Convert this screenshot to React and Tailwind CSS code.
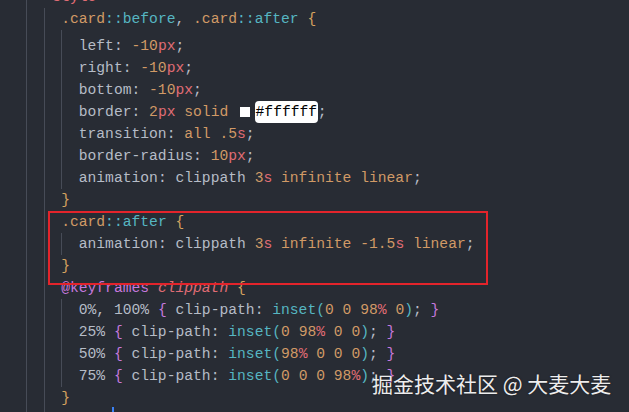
import React from 'react';

const P = 'text-[#b6bcc7]';
const O = 'text-[#d19a66]';
const R = 'text-[#e06c75]';
const T = 'text-[#56b6c2]';
const V = 'text-[#c678dd]';
const Y = 'text-[#d5a25f]';

const Line = ({ indent, h = 'h-[22px]', children }) => {
  const guides = [];
  for (let i = 2; i < indent; i += 2) guides.push(i);
  return (
    <div className={`flex ${h} items-center whitespace-pre`}>
      <span className="w-[2ch] shrink-0 self-stretch" />
      {guides.map((i) => (
        <span key={i} className="w-[2ch] shrink-0 self-stretch border-l border-[#474c57]" />
      ))}
      {children}
    </div>
  );
};

const Px = ({ n }) => (
  <>
    <span className={O}>{n}</span>
    <span className={R}>px</span>
  </>
);

const Prop = ({ name }) => <span className={P}>{name}: </span>;

const Inset = ({ pct, args }) => (
  <>
    <span className={P}>{pct}</span>
    <span className={V}> {'{'} </span>
    <Prop name="clip-path" />
    <span className={T}>inset(</span>
    {args.map((a, i) => (
      <React.Fragment key={i}>
        {i > 0 && <span> </span>}
        {a === '98%' ? (
          <>
            <span className={O}>98</span>
            <span className={R}>%</span>
          </>
        ) : (
          <span className={O}>{a}</span>
        )}
      </React.Fragment>
    ))}
    <span className={T}>)</span>
    <span className={P}>; </span>
    <span className={V}>{'}'}</span>
  </>
);

export default function App() {
  return (
    <div className="relative h-[412px] w-full overflow-hidden bg-[#282c34] font-['Liberation_Mono',monospace] text-[14.67px]">
      <div className="-mt-[14px] flex flex-col pl-[8.4px]">
        <Line indent={4}>
          <span className="text-[#e06c75]">&lt;style&gt;</span>
        </Line>
        <Line indent={6}>
          <span className={O}>.card</span>
          <span className={T}>::before</span>
          <span className={P}>, </span>
          <span className={O}>.card</span>
          <span className={T}>::after</span>
          <span className={Y}> {'{'}</span>
        </Line>
        <Line indent={8} h="h-[5px]" />
        <Line indent={8}>
          <Prop name="left" />
          <Px n="-10" />
          <span className={P}>;</span>
        </Line>
        <Line indent={8}>
          <Prop name="right" />
          <Px n="-10" />
          <span className={P}>;</span>
        </Line>
        <Line indent={8}>
          <Prop name="bottom" />
          <Px n="-10" />
          <span className={P}>;</span>
        </Line>
        <Line indent={8}>
          <Prop name="border" />
          <Px n="2" />
          <span className={O}> solid </span>
          <span className="flex h-full w-[18px] items-center">
            <span className="ml-[3px] h-[10px] w-[10px] bg-white" />
          </span>
          <span className="flex h-full items-center rounded-[4px] bg-white px-[0.5px] text-black">#ffffff</span>
          <span className={P}>;</span>
        </Line>
        <Line indent={8}>
          <Prop name="transition" />
          <span className={O}>all .5</span>
          <span className={R}>s</span>
          <span className={P}>;</span>
        </Line>
        <Line indent={8}>
          <Prop name="border-radius" />
          <Px n="10" />
          <span className={P}>;</span>
        </Line>
        <Line indent={8}>
          <Prop name="animation" />
          <span className={P}>clippath </span>
          <span className={O}>3</span>
          <span className={R}>s</span>
          <span className={O}> infinite linear</span>
          <span className={P}>;</span>
        </Line>
        <Line indent={6}>
          <span className={Y}>{'}'}</span>
        </Line>
        <Line indent={6}>
          <span className={O}>.card</span>
          <span className={T}>::after</span>
          <span className={Y}> {'{'}</span>
        </Line>
        <Line indent={8}>
          <Prop name="animation" />
          <span className={P}>clippath </span>
          <span className={O}>3</span>
          <span className={R}>s</span>
          <span className={O}> infinite -1.5</span>
          <span className={R}>s</span>
          <span className={O}> linear</span>
          <span className={P}>;</span>
        </Line>
        <Line indent={6}>
          <span className={Y}>{'}'}</span>
        </Line>
        <Line indent={6}>
          <span className={V}>@keyframes </span>
          <span className={`${R} italic`}>clippath</span>
          <span className={Y}> {'{'}</span>
        </Line>
        <Line indent={8}>
          <Inset pct="0%, 100%" args={['0', '0', '98%', '0']} />
        </Line>
        <Line indent={8}>
          <Inset pct="25%" args={['0', '98%', '0', '0']} />
        </Line>
        <Line indent={8}>
          <Inset pct="50%" args={['98%', '0', '0', '0']} />
        </Line>
        <Line indent={8}>
          <Inset pct="75%" args={['0', '0', '0', '98%']} />
        </Line>
        <Line indent={6}>
          <span className={Y}>{'}'}</span>
        </Line>
        <Line indent={6} />
      </div>

      {/* highlight annotation */}
      <div className="absolute left-[48px] top-[211px] h-[74px] w-[440px] border-2 border-[#e3242b]" />

      {/* cursor mark */}
      <div className="absolute left-[112px] top-[407px] h-[5px] w-[2px] bg-[#3b82f6]" />

      <div className="absolute left-[372px] top-[369px] font-['Noto_Sans_CJK_SC',sans-serif] text-[21px] leading-[28px] text-[#ededed] [text-shadow:0_0_2px_rgba(0,0,0,0.5)]">
        掘金技术社区 @ 大麦大麦
      </div>
    </div>
  );
}
